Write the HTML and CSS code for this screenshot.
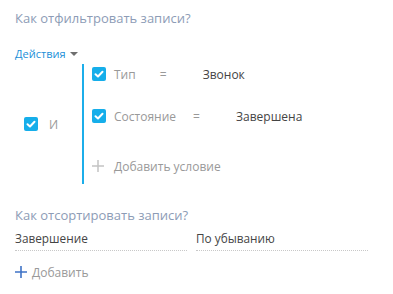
FILE: index.html
```html
<!DOCTYPE html>
<html lang="en">
<head>
    <meta charset="UTF-8">
    <meta name="viewport" content="width=device-width, initial-scale=1.0">
    <title>Фильтр и сортировка</title>
    <link rel="stylesheet" href="styles.css">
</head>
<body>

    <div class="panel">
        <h2 class="section-title">Как отфильтровать записи?</h2>

        <div class="actions">Действия <span class="caret"></span></div>

        <div class="filter-group">
            <div class="logic">
                <span class="checkbox">
                    <svg viewBox="0 0 14 14" width="14" height="14"><path d="M3.5 7.2 L6 9.5 L10.5 4.8" fill="none" stroke="#fff" stroke-width="2" stroke-linecap="round" stroke-linejoin="round"/></svg>
                </span>
                <span class="logic-label">И</span>
            </div>

            <div class="conditions">
                <div class="condition">
                    <span class="checkbox">
                        <svg viewBox="0 0 14 14" width="14" height="14"><path d="M3.5 7.2 L6 9.5 L10.5 4.8" fill="none" stroke="#fff" stroke-width="2" stroke-linecap="round" stroke-linejoin="round"/></svg>
                    </span>
                    <span class="cond-column">Тип</span>
                    <span class="cond-op op-short">=</span>
                    <span class="cond-value">Звонок</span>
                </div>

                <div class="condition">
                    <span class="checkbox">
                        <svg viewBox="0 0 14 14" width="14" height="14"><path d="M3.5 7.2 L6 9.5 L10.5 4.8" fill="none" stroke="#fff" stroke-width="2" stroke-linecap="round" stroke-linejoin="round"/></svg>
                    </span>
                    <span class="cond-column">Состояние</span>
                    <span class="cond-op op-long">=</span>
                    <span class="cond-value">Завершена</span>
                </div>

                <div class="add-condition">
                    <svg class="plus" viewBox="0 0 12 12" width="12" height="12"><path d="M6 0 V12 M0 6 H12" stroke="#c4c4c4" stroke-width="1.5"/></svg>
                    <span>Добавить условие</span>
                </div>
            </div>
        </div>

        <h2 class="section-title sort-title">Как отсортировать записи?</h2>

        <div class="sort-row">
            <div class="sort-field">Завершение</div>
            <div class="sort-field">По убыванию</div>
        </div>

        <div class="add-sort">
            <svg class="plus" viewBox="0 0 12 12" width="12" height="12"><path d="M6 0 V12 M0 6 H12" stroke="#3f73c6" stroke-width="1.6"/></svg>
            <span>Добавить</span>
        </div>
    </div>

</body>
</html>
```

FILE: styles.css
```css
body {
    font-family: 'Open Sans', 'Noto Sans', sans-serif;
    margin: 0;
    background-color: #ffffff;
    color: #444;
}

.panel {
    padding: 8px 15px 0 15px;
}

.section-title {
    font-size: 13px;
    font-weight: normal;
    line-height: 20px;
    color: #8d9cb6;
    margin: 0;
}

.actions {
    margin-top: 17px;
    font-size: 11px;
    line-height: 18px;
    color: #1a8fd8;
    display: flex;
    align-items: center;
    gap: 4px;
}

.caret {
    width: 0;
    height: 0;
    border-left: 4px solid transparent;
    border-right: 4px solid transparent;
    border-top: 4px solid #6f6f6f;
}

/* Filter group */
.filter-group {
    display: flex;
    margin-top: 1px;
}

.logic {
    width: 58px;
    padding-left: 9px;
    display: flex;
    align-items: center;
    gap: 11px;
}

.logic-label {
    font-size: 12px;
    color: #999;
}

.checkbox {
    width: 14px;
    height: 14px;
    border-radius: 2px;
    background-color: #16aeea;
    display: inline-flex;
    flex-shrink: 0;
}

.conditions {
    border-left: 2px solid #1caeea;
    padding: 0 0 8px 8px;
    display: flex;
    flex-direction: column;
    gap: 22px;
    width: 260px;
}

.condition,
.add-condition {
    display: flex;
    align-items: center;
    height: 20px;
    font-size: 12px;
}

.add-condition {
    margin-top: 8px;
    color: #999;
    gap: 10px;
}

.cond-column {
    margin-left: 8px;
    color: #999;
}

.cond-op {
    color: #999;
    width: 43px;
}

.op-short {
    margin-left: 24px;
}

.op-long {
    margin-left: 17px;
}

.cond-value {
    color: #444;
}

/* Sorting */
.sort-title {
    margin-top: 21px;
}

.sort-row {
    display: flex;
    gap: 9px;
    margin-top: 4px;
}

.sort-field {
    width: 172px;
    font-size: 11.8px;
    line-height: 18px;
    padding-bottom: 3px;
    border-bottom: 1px dotted #c8c8c8;
    color: #444;
}

.add-sort {
    margin-top: 12px;
    display: flex;
    align-items: center;
    gap: 5px;
    height: 18px;
    font-size: 12px;
    color: #999;
}
```
